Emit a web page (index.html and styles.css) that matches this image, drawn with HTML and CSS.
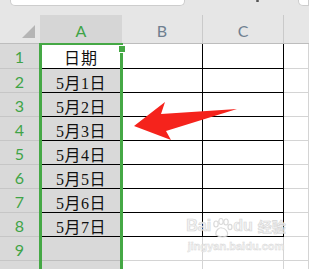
FILE: index.html
```html
<!DOCTYPE html>
<html>
<head>
<meta charset="utf-8">
<link rel="stylesheet" href="styles.css">
</head>
<body>
<div class="sheet">
  <div class="topbar">
    <div class="namebox"></div>
    <div class="dot"></div>
    <div class="fbox"></div>
  </div>
  <div class="colheads">
    <div class="corner"><svg width="13" height="13" viewBox="0 0 13 13"><polygon points="13,0 13,13 0,13" fill="#b5b5b5"/></svg></div>
    <div class="ch ch-a">A</div>
    <div class="ch ch-b">B</div>
    <div class="ch ch-c">C</div>
    <div class="ch ch-d"></div>
  </div>
  <div class="rows">
    <div class="row first"><div class="rh">1</div><div class="c ca active">日期</div><div class="c cb"></div><div class="c cc"></div><div class="c cd"></div></div>
    <div class="row"><div class="rh">2</div><div class="c ca">5月1日</div><div class="c cb"></div><div class="c cc"></div><div class="c cd"></div></div>
    <div class="row"><div class="rh">3</div><div class="c ca">5月2日</div><div class="c cb"></div><div class="c cc"></div><div class="c cd"></div></div>
    <div class="row"><div class="rh">4</div><div class="c ca">5月3日</div><div class="c cb"></div><div class="c cc"></div><div class="c cd"></div></div>
    <div class="row"><div class="rh">5</div><div class="c ca">5月4日</div><div class="c cb"></div><div class="c cc"></div><div class="c cd"></div></div>
    <div class="row"><div class="rh">6</div><div class="c ca">5月5日</div><div class="c cb"></div><div class="c cc"></div><div class="c cd"></div></div>
    <div class="row"><div class="rh">7</div><div class="c ca">5月6日</div><div class="c cb"></div><div class="c cc"></div><div class="c cd"></div></div>
    <div class="row"><div class="rh">8</div><div class="c ca">5月7日</div><div class="c cb"></div><div class="c cc"></div><div class="c cd"></div></div>
    <div class="row empty"><div class="rh">9</div><div class="c ca"></div><div class="c cb"></div><div class="c cc"></div><div class="c cd"></div></div>
    <div class="row empty"><div class="rh">10</div><div class="c ca"></div><div class="c cb"></div><div class="c cc"></div><div class="c cd"></div></div>
  </div>

  <div class="selection"></div>
  <div class="handle"></div>

  <svg class="arrow" width="309" height="269" viewBox="0 0 309 269">
    <polygon points="134,126 165,102 161,114 237,109 166,131 171,140" fill="#f5231c"/>
  </svg>

  <div class="watermark">
    <div class="wm-logo">Bai<svg class="paw" width="22" height="20" viewBox="0 0 22 20"><g fill="none" stroke="#d6d6d6" stroke-width="1.2"><ellipse cx="5" cy="6" rx="2.2" ry="3"/><ellipse cx="10" cy="3.5" rx="2.2" ry="3"/><ellipse cx="15" cy="4" rx="2.2" ry="3"/><ellipse cx="19" cy="9" rx="2" ry="2.6"/><path d="M5 17 C4 12 9 9 11 10 C14 10 18 14 16 18 C13 19 8 19 5 17 Z"/></g></svg>du<span class="wm-cn">经验</span></div>
    <div class="wm-url">jingyan.baidu.com</div>
  </div>
</div>
</body>
</html>
```
FILE: styles.css
```css
html, body {
  margin: 0;
  padding: 0;
  background: #ffffff;
}
.sheet {
  position: relative;
  width: 309px;
  height: 269px;
  overflow: hidden;
  background: #ffffff;
  font-family: "Liberation Sans", sans-serif;
}
.topbar {
  height: 15px;
  background: #e6e6e6;
  display: flex;
  align-items: flex-start;
}
.namebox {
  margin-left: 10px;
  width: 182px;
  height: 5px;
  background: #ffffff;
  border: 1px solid #cdcdcd;
  border-top: none;
  border-radius: 0 0 5px 5px;
}
.dot {
  margin-left: 71px;
  width: 3px;
  height: 2px;
  background: #555555;
  border-radius: 1px;
}
.fbox {
  margin-left: 39px;
  width: 10px;
  height: 5px;
  background: #ffffff;
  border: 1px solid #cdcdcd;
  border-top: none;
  border-radius: 0 0 0 5px;
}
.colheads {
  display: flex;
  height: 29px;
  box-sizing: border-box;
  border-bottom: 1px solid #bdbdbd;
  background: #e6e6e6;
}
.corner {
  width: 40px;
  flex: none;
  display: flex;
  justify-content: flex-end;
  align-items: flex-end;
  padding: 0 5px 5px 0;
  box-sizing: border-box;
}
.corner svg { display: block; }
.ch {
  flex: none;
  box-sizing: border-box;
  display: flex;
  align-items: center;
  justify-content: center;
  font-family: "Lato", "Liberation Sans", sans-serif;
  font-size: 16px;
  padding-top: 2px;
  color: #6f7f90;
  border-right: 1px solid #cacaca;
}
.ch-a {
  width: 82px;
  background: #d6d6d6;
  color: #3fa447;
  border-right: none;
}
.ch-b { width: 81px; }
.ch-c { width: 81px; }
.ch-d { flex: 1; border-right: none; }

.rows {
  display: flex;
  flex-direction: column;
}
.row {
  display: flex;
  height: 24px;
}
.row.first { height: 25px; }
.rh {
  width: 40px;
  flex: none;
  box-sizing: border-box;
  background: #d9d9d9;
  border-bottom: 1px solid #c6c6c6;
  color: #3fa447;
  font-family: "Lato", "Liberation Sans", sans-serif;
  font-size: 16px;
  display: flex;
  align-items: center;
  justify-content: center;
  padding-right: 1px;
  padding-top: 1px;
}
.c {
  flex: none;
  box-sizing: border-box;
  border-bottom: 1px solid #000000;
  border-right: 1px solid #000000;
}
.ca {
  width: 82px;
  background: #d9d9d9;
  display: flex;
  align-items: center;
  justify-content: center;
  font-family: "Liberation Serif", "Noto Sans CJK SC", serif;
  font-size: 16px;
  letter-spacing: 0.5px;
  color: #111111;
  padding-top: 2px;
  padding-left: 1px;
}
.ca.active { background: #ffffff; letter-spacing: 1px; }
.cb { width: 81px; }
.cc { width: 81px; }
.cd {
  flex: 1;
  border-bottom-color: #d4d4d4;
  border-right-color: #d4d4d4;
}
.row.empty .c {
  border-bottom-color: #d4d4d4;
  border-right-color: #d4d4d4;
}
.row.empty .ca {
  border-bottom-color: #bdbdbd;
}

.selection {
  position: absolute;
  left: 39px;
  top: 43px;
  width: 84px;
  height: 240px;
  box-sizing: border-box;
  border: 3px solid #45a845;
  border-top-width: 2px;
  border-bottom: none;
}
.handle {
  position: absolute;
  left: 119px;
  top: 46px;
  width: 6px;
  height: 6px;
  background: #45a845;
  box-shadow: 0 0 0 1px #ffffff;
}
.arrow {
  position: absolute;
  left: 0;
  top: 0;
}
.watermark {
  position: absolute;
  left: 186px;
  top: 216px;
  width: 100px;
  display: flex;
  flex-direction: column;
  align-items: center;
  white-space: nowrap;
  opacity: 0.9;
}
.wm-logo {
  display: flex;
  align-items: flex-end;
  font-family: "Liberation Sans", sans-serif;
  font-weight: bold;
  font-size: 16px;
  line-height: 20px;
  color: #f2f2f2;
  -webkit-text-stroke: 0.6px #d2d2d2;
}
.paw { margin: 0 0 -2px 0; flex: none; }
.wm-cn {
  font-family: "Noto Sans CJK SC", sans-serif;
  margin-left: 5px;
  font-size: 14px;
}
.wm-url {
  font-family: "Liberation Sans", sans-serif;
  font-weight: bold;
  font-size: 11px;
  line-height: 14px;
  margin-top: 3px;
  color: #f2f2f2;
  -webkit-text-stroke: 0.4px #d2d2d2;
}
```
